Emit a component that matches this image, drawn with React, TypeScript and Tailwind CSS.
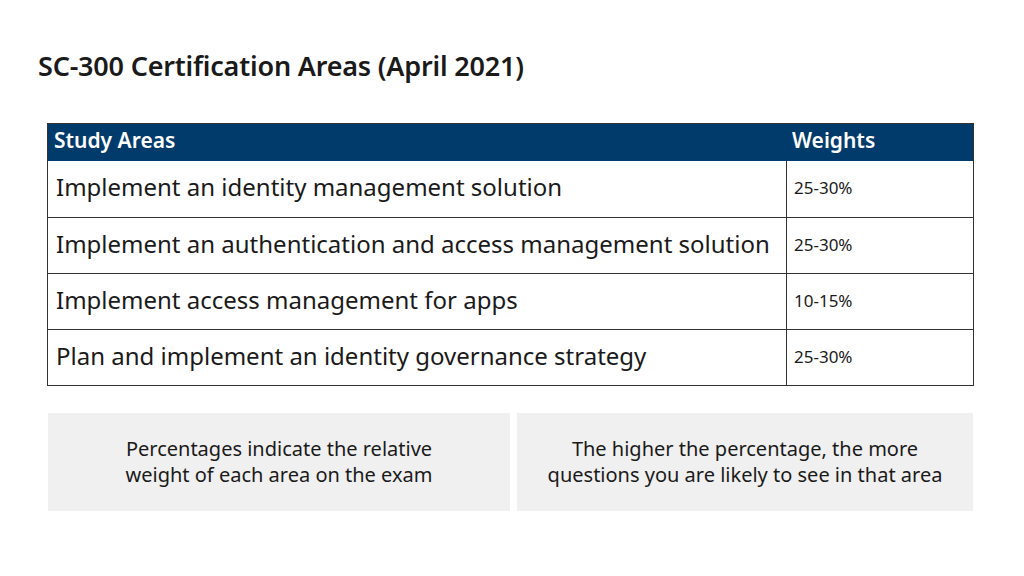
export default function App() {
  const rows = [
    ["Implement an identity management solution", "25-30%"],
    ["Implement an authentication and access management solution", "25-30%"],
    ["Implement access management for apps", "10-15%"],
    ["Plan and implement an identity governance strategy", "25-30%"],
  ];
  return (
    <div className="w-[1024px] h-[576px] bg-white text-[#1a1a1a] overflow-hidden" style={{ fontFamily: '"Noto Sans", "Open Sans", sans-serif' }}>
      <h1 className="pl-[38px] pt-[48px] h-[123px] text-[27px] font-semibold tracking-[-0.2px] leading-[36px]">SC-300 Certification Areas (April 2021)</h1>
      <div className="ml-[47px] w-[927px] border border-[#333]">
        <div className="flex h-[37px] bg-[#003b6b] text-white text-[21px] font-semibold leading-[30px]">
          <div className="w-[738px] pl-[6px] pt-[1px]">Study Areas</div>
          <div className="flex-1 pl-[6px] pt-[1px]">Weights</div>
        </div>
        {rows.map(([a, w], i) => (
          <div key={i} className={`flex h-[56px] ${i > 0 ? "border-t border-[#333]" : ""}`}>
            <div className="w-[739px] border-r border-[#333] pl-[8px] pt-[11px] text-[24px] leading-[30px] whitespace-nowrap">{a}</div>
            <div className="flex-1 pl-[7px] pt-[16px] text-[17px] leading-[22px]">{w}</div>
          </div>
        ))}
      </div>
      <div className="flex gap-[7px] ml-[48px] mt-[27px]">
        <div className="w-[462px] h-[98px] bg-[#f0f0f0] flex items-center justify-center text-center text-[20px] leading-[26px]">Percentages indicate the relative<br />weight of each area on the exam</div>
        <div className="w-[456px] h-[98px] bg-[#f0f0f0] flex items-center justify-center text-center text-[20px] leading-[26px]">The higher the percentage, the more<br />questions you are likely to see in that area</div>
      </div>
    </div>
  );
}
